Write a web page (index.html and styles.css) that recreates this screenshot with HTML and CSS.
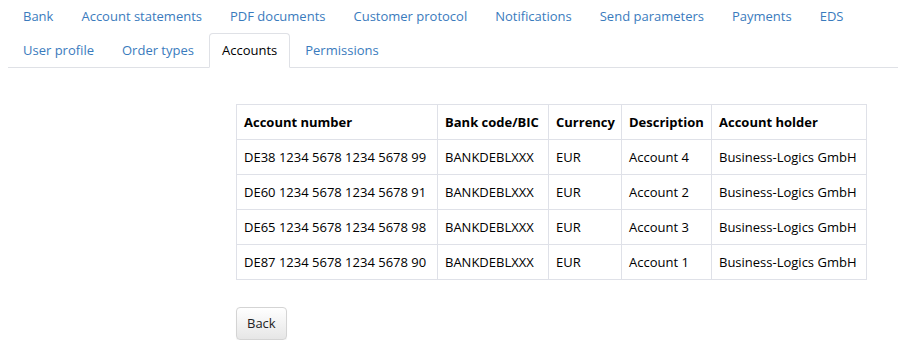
FILE: index.html
```html
<!DOCTYPE html>
<html>
<head>
<meta charset="utf-8">
<link rel="stylesheet" href="styles.css">
</head>
<body>
<ul class="tabs">
  <li class="tab"><a href="#">Bank</a></li>
  <li class="tab"><a href="#">Account statements</a></li>
  <li class="tab"><a href="#">PDF documents</a></li>
  <li class="tab"><a href="#">Customer protocol</a></li>
  <li class="tab"><a href="#">Notifications</a></li>
  <li class="tab"><a href="#">Send parameters</a></li>
  <li class="tab"><a href="#">Payments</a></li>
  <li class="tab"><a href="#">EDS</a></li>
  <li class="tab"><a href="#">User profile</a></li>
  <li class="tab"><a href="#">Order types</a></li>
  <li class="tab active"><a href="#">Accounts</a></li>
  <li class="tab"><a href="#">Permissions</a></li>
</ul>
<div class="content">
  <table class="accounts">
    <thead>
      <tr>
        <th class="c-num">Account number</th>
        <th class="c-bic">Bank code/BIC</th>
        <th class="c-cur">Currency</th>
        <th class="c-desc">Description</th>
        <th class="c-hold">Account holder</th>
      </tr>
    </thead>
    <tbody>
      <tr><td>DE38 1234 5678 1234 5678 99</td><td>BANKDEBLXXX</td><td>EUR</td><td>Account 4</td><td>Business-Logics GmbH</td></tr>
      <tr><td>DE60 1234 5678 1234 5678 91</td><td>BANKDEBLXXX</td><td>EUR</td><td>Account 2</td><td>Business-Logics GmbH</td></tr>
      <tr><td>DE65 1234 5678 1234 5678 98</td><td>BANKDEBLXXX</td><td>EUR</td><td>Account 3</td><td>Business-Logics GmbH</td></tr>
      <tr><td>DE87 1234 5678 1234 5678 90</td><td>BANKDEBLXXX</td><td>EUR</td><td>Account 1</td><td>Business-Logics GmbH</td></tr>
    </tbody>
  </table>
  <button class="btn" type="button">Back</button>
</div>
</body>
</html>
```
FILE: styles.css
```css
html, body {
  background: #fff;
}
body {
  margin: 0 8px;
  font-family: "Open Sans", "Noto Sans", sans-serif;
  font-size: 13px;
  color: #000;
}
.tabs {
  list-style: none;
  margin: -1px 0 0 0;
  padding: 0 0 0 2px;
  display: flex;
  flex-wrap: wrap;
  border-bottom: 1px solid #dfe1e6;
}
.tab {
  margin-bottom: -1px;
  margin-right: 2px;
}
.tab a {
  display: block;
  padding: 7px 12px;
  line-height: 19px;
  border: 1px solid transparent;
  border-radius: 4px 4px 0 0;
  color: #3a7bbd;
  text-decoration: none;
}
.tab.active a {
  color: #000;
  background: #fff;
  border-color: #dfe1e6 #dfe1e6 transparent;
}
.content {
  padding: 36px 0 0 228px;
}
.accounts {
  border-collapse: collapse;
  table-layout: fixed;
  width: 631px;
}
.accounts th, .accounts td {
  border: 1px solid #dfe1e8;
  padding: 7px 7px;
  line-height: 20px;
  text-align: left;
  white-space: nowrap;
}
.accounts th {
  font-weight: bold;
  color: #000;
}
.c-num { width: 186px; }
.c-bic { width: 96px; }
.c-cur { width: 58px; }
.c-desc { width: 75px; }
.btn {
  display: block;
  margin-top: 27px;
  padding: 6px 10px;
  line-height: 19px;
  font-family: inherit;
  font-size: 13px;
  color: #222;
  border: 1px solid #d4d4d4;
  border-radius: 4px;
  background: linear-gradient(#ffffff, #e6e6e6);
  box-shadow: 0 1px 1px rgba(0,0,0,0.06);
}
```
